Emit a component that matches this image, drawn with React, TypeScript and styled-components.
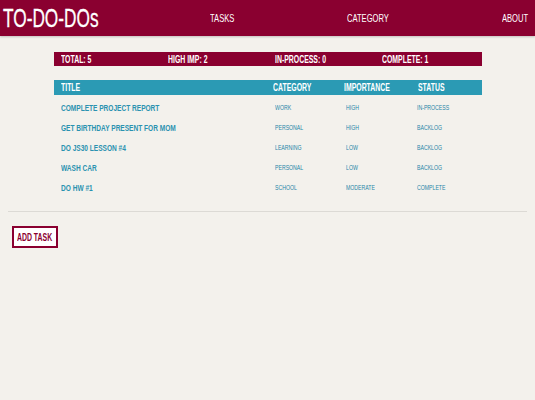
import React from "react";
import styled, { createGlobalStyle } from "styled-components";

const Global = createGlobalStyle`
  html, body { margin: 0; padding: 0; background: #f3f1ec; }
  body { font-family: "Liberation Sans", Arial, sans-serif; }
`;

const Narrow = styled.span`
  display: inline-block;
  white-space: nowrap;
  transform: scaleX(0.69);
  transform-origin: 0 50%;
`;

const Fit = styled.span<{ $w: number }>`
  display: inline-block;
  width: ${(p) => p.$w}px;
  white-space: nowrap;
`;

const Header = styled.header`
  height: 36px;
  background: #8a0030;
  display: flex;
  align-items: center;
  justify-content: space-between;
  padding: 0 5px 0 3px;
  box-shadow: 0 1px 2px rgba(0, 0, 0, 0.2);
`;

const Logo = styled.h1`
  margin: 0;
  color: #fff;
  font-size: 25px;
  font-weight: 400;
  line-height: 1;
  margin-top: 1px;
  -webkit-text-stroke: 0.3px #fff;
`;

const NavItem = styled.a`
  color: #fff;
  font-size: 11px;
  text-decoration: none;
  line-height: 1;
`;

const Main = styled.main`
  padding-top: 16px;
`;

const Stats = styled.div`
  width: 80%;
  margin: 0 auto;
  display: grid;
  grid-template-columns: repeat(4, 1fr);
  background: #8a0030;
  height: 14px;
  align-items: center;
`;

const Stat = styled.span`
  color: #fff;
  font-weight: 700;
  font-size: 10px;
  padding-left: 7px;
`;

const Table = styled.div`
  width: 80%;
  margin: 14px auto 0;
`;

const Row = styled.div<{ $head?: boolean }>`
  display: grid;
  grid-template-columns: 3fr 1fr 1fr 1fr;
  align-items: center;
  height: ${(p) => (p.$head ? "15px" : "20px")};
  background: ${(p) => (p.$head ? "#2b9ab4" : "transparent")};
  margin-bottom: ${(p) => (p.$head ? "2px" : "0")};
`;

const HeadCell = styled.span`
  color: #fff;
  font-weight: 700;
  font-size: 10px;
  padding-left: 7px;
`;

const TitleCell = styled.span`
  color: #2a92b0;
  font-weight: 700;
  font-size: 9.5px;
  padding-left: 7px;
`;

const Cell = styled.span`
  color: #1f86a8;
  font-size: 7.5px;
  padding-left: 7px;
`;

const Rule = styled.hr`
  border: none;
  border-top: 1px solid #dcdad5;
  margin: 14px 8px 0;
`;

const AddButton = styled.button`
  display: block;
  margin: 14px 0 0 12px;
  width: 46px;
  height: 22px;
  background: #fff;
  border: 2.5px solid #8a0030;
  color: #8a0030;
  font-family: inherit;
  font-weight: 700;
  font-size: 10px;
  padding: 0 0 0 3px;
  text-align: left;
  overflow: visible;
`;

const tasks = [
  ["COMPLETE PROJECT REPORT", "WORK", "HIGH", "IN-PROCESS"],
  ["GET BIRTHDAY PRESENT FOR MOM", "PERSONAL", "HIGH", "BACKLOG"],
  ["DO JS30 LESSON #4", "LEARNING", "LOW", "BACKLOG"],
  ["WASH CAR", "PERSONAL", "LOW", "BACKLOG"],
  ["DO HW #1", "SCHOOL", "MODERATE", "COMPLETE"],
];

export default function App() {
  return (
    <>
      <Global />
      <Header>
        <Logo>
          <Fit $w={95}>
            <Narrow>TO-DO-DOs</Narrow>
          </Fit>
        </Logo>
        <NavItem>
          <Fit $w={25}>
            <Narrow>TASKS</Narrow>
          </Fit>
        </NavItem>
        <NavItem>
          <Fit $w={43}>
            <Narrow>CATEGORY</Narrow>
          </Fit>
        </NavItem>
        <NavItem>
          <Fit $w={28}>
            <Narrow>ABOUT</Narrow>
          </Fit>
        </NavItem>
      </Header>
      <Main>
        <Stats>
          <Stat><Narrow>TOTAL: 5</Narrow></Stat>
          <Stat><Narrow>HIGH IMP: 2</Narrow></Stat>
          <Stat><Narrow>IN-PROCESS: 0</Narrow></Stat>
          <Stat><Narrow>COMPLETE: 1</Narrow></Stat>
        </Stats>
        <Table>
          <Row $head>
            <HeadCell><Narrow>TITLE</Narrow></HeadCell>
            <HeadCell><Narrow>CATEGORY</Narrow></HeadCell>
            <HeadCell><Narrow>IMPORTANCE</Narrow></HeadCell>
            <HeadCell><Narrow>STATUS</Narrow></HeadCell>
          </Row>
          {tasks.map((t) => (
            <Row key={t[0]}>
              <TitleCell><Narrow>{t[0]}</Narrow></TitleCell>
              <Cell><Narrow>{t[1]}</Narrow></Cell>
              <Cell><Narrow>{t[2]}</Narrow></Cell>
              <Cell><Narrow>{t[3]}</Narrow></Cell>
            </Row>
          ))}
        </Table>
        <Rule />
        <AddButton>
          <Narrow>ADD TASK</Narrow>
        </AddButton>
      </Main>
    </>
  );
}
